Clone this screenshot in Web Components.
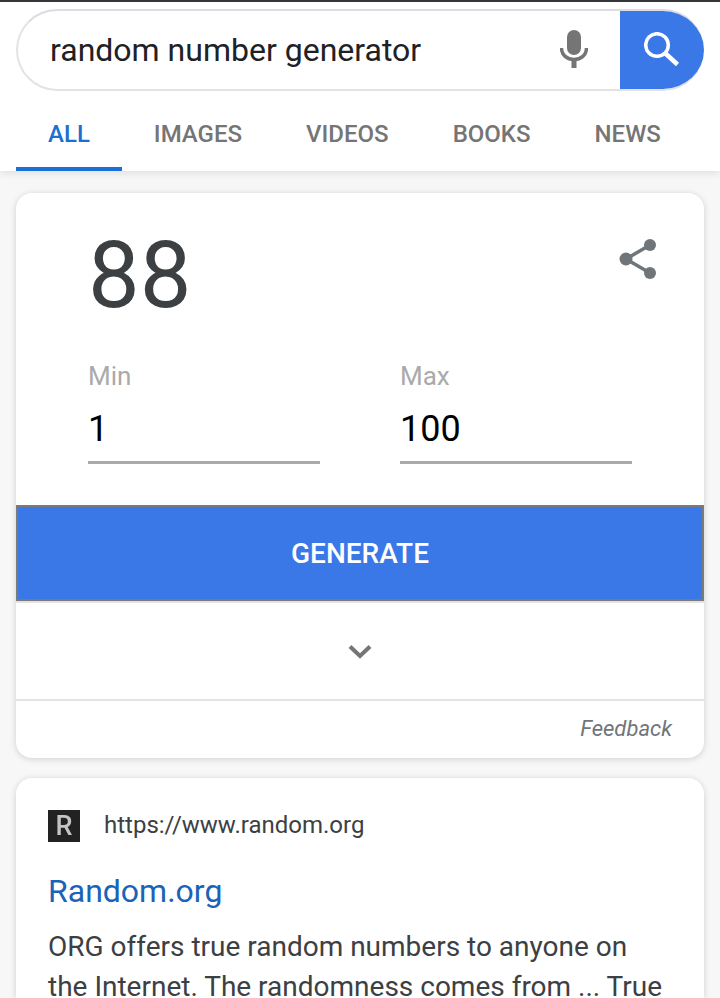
<!doctype html>
<html>
<head>
<meta charset="utf-8">
<title>random number generator</title>
<style>
    html, body { margin: 0; height: 998px; overflow: hidden; }
    body { background: #f7f7f7; font-family: Roboto, "Liberation Sans", sans-serif; }
</style>
</head>
<body>
<search-header query="random number generator"></search-header>
<main-column>
    <rng-card value="88" min="1" max="100"></rng-card>
    <result-card url="https://www.random.org" heading="Random.org">
        ORG offers true random numbers to anyone on the Internet. The randomness comes from ... True
    </result-card>
</main-column>
<script>
    function shadow(el, html) {
        const root = el.attachShadow({mode: 'open'});
        root.innerHTML = html;
        return root;
    }

    customElements.define('search-header', class extends HTMLElement {
        connectedCallback() {
            const tabs = ['All', 'Images', 'Videos', 'Books', 'News'];
            shadow(this, `
                <style>
                    :host { display: block; height: 171px; background: #fff; border-top: 2px solid #35363a; box-sizing: border-box;
                        box-shadow: 0 2px 8px rgba(0,0,0,.1); position: relative; }
                    .box { display: flex; align-items: center; box-sizing: border-box; margin: 7px 16px 0; height: 82px;
                        border: 2px solid #e3e3e6; border-top-color: #dcdce2; border-right: 0; border-radius: 41px; overflow: hidden; }
                    .q { flex: 1; padding-left: 32px; font-size: 32px; color: #202124; }
                    .mic { display: flex; margin: -2px 32px 0 0; }
                    .go { width: 84px; height: 82px; margin: -2px 0; background: #3b78e7; display: flex; align-items: center; justify-content: center; }
                    nav { display: flex; padding-left: 16px; }
                    a { padding: 10px 32px 0; height: 80px; box-sizing: border-box; display: flex; align-items: center; font-size: 24px; font-weight: 500;
                        color: #757575; text-transform: uppercase; border-bottom: 4px solid transparent; }
                    a.on { color: #1a6fd0; border-bottom-color: #1a6fd8; }
                </style>
                <div class="box">
                    <div class="q">${this.getAttribute('query')}</div>
                    <div class="mic">
                        <svg width="28" height="38" viewBox="0 0 28 38"><rect x="7" y="0" width="14" height="25" rx="7" fill="#757575"/><path d="M1.500 18c0 7 5.500 11.500 12.500 11.500S26.500 25 26.500 18" fill="none" stroke="#757575" stroke-width="3.500"/><rect x="11.500" y="28" width="5" height="10" fill="#757575"/></svg>
                    </div>
                    <div class="go">
                        <svg width="36" height="36" viewBox="0 0 36 36"><circle cx="13" cy="13" r="11.300" fill="none" stroke="#fff" stroke-width="3.500"/><path d="M21.500 21.500L33.500 32.500" stroke="#fff" stroke-width="4.500" fill="none"/></svg>
                    </div>
                </div>
                <nav>${tabs.map((t, i) => `<a class="${i ? '' : 'on'}">${t}</a>`).join('')}</nav>
            `);
        }
    });

    customElements.define('main-column', class extends HTMLElement {
        constructor() {
            super();
            shadow(this, `
                <style>:host { display: flex; flex-direction: column; gap: 20px; padding: 22px 16px 0; }</style>
                <slot></slot>
            `);
        }
    });

    customElements.define('rng-field', class extends HTMLElement {
        connectedCallback() {
            shadow(this, `
                <style>
                    :host { display: block; width: 232px; }
                    .l { font-size: 26px; line-height: 34px; color: #aaa; }
                    .v { font-size: 36px; line-height: 44px; color: #000; margin-top: 14px; height: 57px; box-sizing: border-box;
                        border-bottom: 3px solid #aaa; }
                </style>
                <div class="l">${this.getAttribute('label')}</div>
                <div class="v">${this.getAttribute('value')}</div>
            `);
        }
    });

    customElements.define('rng-card', class extends HTMLElement {
        connectedCallback() {
            shadow(this, `
                <style>
                    :host { display: block; height: 565px; background: #fff; border-radius: 16px; overflow: hidden;
                        box-shadow: 0 1px 6px rgba(32,33,36,.18); }
                    .top { display: flex; justify-content: space-between; padding: 27px 47px 0 72px; height: 166px; box-sizing: border-box; }
                    .num { font-size: 92px; line-height: 112px; color: #3c4043; }
                    .share { margin-top: 18px; display: flex; }
                    .fields { display: flex; gap: 80px; padding: 0 72px; height: 146px; box-sizing: border-box; }
                    button { display: block; width: 100%; height: 96px; margin: 0; padding: 0; border: 2px solid #7a7a7a; background: #3b78e7; color: #fff;
                        font: 500 28px Roboto, sans-serif; text-transform: uppercase; }
                    .more { display: flex; align-items: center; justify-content: center; height: 100px; box-sizing: border-box;
                        border-top: 2px solid #e3e3e3; border-bottom: 2px solid #e3e3e3; }
                    .fb { display: flex; justify-content: flex-end; align-items: center; height: 55px; padding-right: 32px; font-size: 22px; font-style: italic; color: #70757a; }
                </style>
                <div class="top">
                    <div class="num">${this.getAttribute('value')}</div>
                    <div class="share">
                        <svg width="38" height="42" viewBox="0 0 38 42"><path d="M7 21L31 7M7 21L31 35" stroke="#70757a" stroke-width="3.500" fill="none"/><circle cx="7" cy="21" r="6.500" fill="#70757a"/><circle cx="31" cy="7" r="6" fill="#70757a"/><circle cx="31" cy="35" r="6" fill="#70757a"/></svg>
                    </div>
                </div>
                <div class="fields">
                    <rng-field label="Min" value="${this.getAttribute('min')}"></rng-field>
                    <rng-field label="Max" value="${this.getAttribute('max')}"></rng-field>
                </div>
                <button>Generate</button>
                <div class="more">
                    <svg width="24" height="15" viewBox="0 0 24 15"><path d="M2 2.500L12 12L22 2.500" fill="none" stroke="#757575" stroke-width="4"/></svg>
                </div>
                <div class="fb">Feedback</div>
            `);
        }
    });

    customElements.define('result-card', class extends HTMLElement {
        connectedCallback() {
            shadow(this, `
                <style>
                    :host { display: block; height: 220px; overflow: hidden; background: #fff; border-radius: 16px 16px 0 0; box-shadow: 0 1px 6px rgba(32,33,36,.18);
                        padding: 31px 32px 0; box-sizing: border-box; }
                    .site { display: flex; align-items: center; gap: 24px; height: 32px; font-size: 24px; color: #3c4043; }
                    .fav { width: 32px; height: 32px; margin-top: 2px; background: #222; overflow: hidden; text-align: center; }
                    .fav b { display: block; color: #c4c4c4; font: 500 27px/32px Roboto, sans-serif; filter: blur(.5px); }
                    h3 { margin: 28px 0 0; font-size: 32px; line-height: 44px; font-weight: 400; color: #1a63b8; }
                    p { margin: 14px 0 0; font-size: 28px; line-height: 40px; color: #3c4043; }
                </style>
                <div class="site"><div class="fav"><b>R</b></div><span>${this.getAttribute('url')}</span></div>
                <h3>${this.getAttribute('heading')}</h3>
                <p><slot></slot></p>
            `);
        }
    });
</script>
</body>
</html>
